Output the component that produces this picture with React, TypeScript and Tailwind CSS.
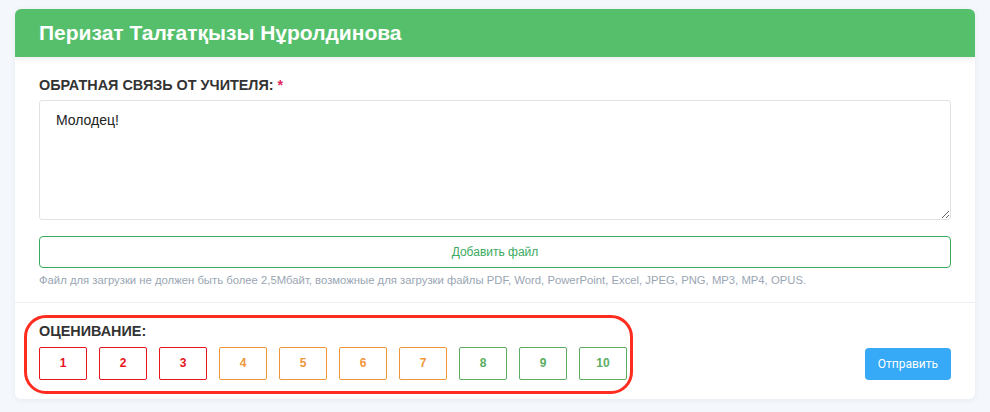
const scores = [
  { n: 1, c: "border-[#e8141e] text-[#e8141e]" },
  { n: 2, c: "border-[#e8141e] text-[#e8141e]" },
  { n: 3, c: "border-[#e8141e] text-[#e8141e]" },
  { n: 4, c: "border-[#f0963a] text-[#f0963a]" },
  { n: 5, c: "border-[#f0963a] text-[#f0963a]" },
  { n: 6, c: "border-[#f0963a] text-[#f0963a]" },
  { n: 7, c: "border-[#f0963a] text-[#f0963a]" },
  { n: 8, c: "border-[#5cad63] text-[#5cad63]" },
  { n: 9, c: "border-[#5cad63] text-[#5cad63]" },
  { n: 10, c: "border-[#5cad63] text-[#5cad63]" },
];

export default function App() {
  return (
    <div className="min-h-[412px] bg-[#f4f7fb] px-[15px] pt-[9px] font-['Liberation_Sans',Arial,sans-serif]">
      <div className="bg-white rounded-md shadow-[0_1px_6px_rgba(0,0,0,0.06)] overflow-hidden">
        <div className="h-[48px] bg-[#55bf6b] px-6 flex items-center shadow-[0_2px_6px_rgba(0,0,0,0.08)]">
          <h1 className="text-[21px] font-bold text-white">Перизат Талғатқызы Нұролдинова</h1>
        </div>

        <div className="px-6 pt-[20px] pb-[13px]">
          <label className="block text-[14.4px] leading-4 font-bold text-[#333]">
            ОБРАТНАЯ СВЯЗЬ ОТ УЧИТЕЛЯ: <span className="text-[#e0245e]">*</span>
          </label>
          <textarea
            defaultValue="Молодец!"
            className="mt-[7px] block w-full h-[120px] border border-[#e2e2e2] rounded-[3px] px-4 py-[9px] text-[14px] text-[#222] outline-none resize-y"
          />
          <button className="mt-4 w-full h-[32px] border border-[#3aaa5e] rounded-[4px] text-[12px] text-[#3aaa5e]">
            Добавить файл
          </button>
          <p className="mt-[4px] text-[11.3px] text-[#9aa6b3]">
            Файл для загрузки не должен быть более 2,5Мбайт, возможные для загрузки файлы PDF, Word, PowerPoint, Excel, JPEG, PNG, MP3, MP4, OPUS.
          </p>
        </div>

        <div className="border-t border-[#eceef1] px-6 pt-[20px] pb-[19px] flex items-end justify-between">
          <div className="relative">
            <div className="text-[14.4px] leading-4 font-bold text-[#333]">ОЦЕНИВАНИЕ:</div>
            <div className="mt-2 flex gap-3">
              {scores.map((s) => (
                <button
                  key={s.n}
                  className={`w-[48px] h-[33px] border rounded-[2px] text-[12px] font-bold ${s.c}`}
                >
                  {s.n}
                </button>
              ))}
            </div>
            <div className="absolute -left-[15px] -right-[6px] -top-[8px] -bottom-[14px] border-[3px] border-[#ff2d20] rounded-[22px] pointer-events-none" />
          </div>
          <button className="h-[32px] px-[13px] bg-[#36a9f7] rounded-[4px] text-[12px] text-white font-['Roboto',sans-serif]">
            Отправить
          </button>
        </div>
      </div>
    </div>
  );
}
